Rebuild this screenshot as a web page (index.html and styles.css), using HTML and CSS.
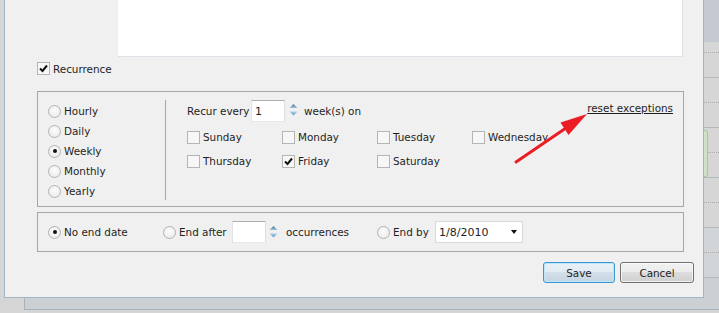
FILE: index.html
```html
<!DOCTYPE html>
<html lang="en">
<head>
    <meta charset="UTF-8">
    <title>Edit recurrence</title>
    <link rel="stylesheet" href="styles.css">
</head>
<body>
    <div class="screen">
        <div class="edge"></div>

        <div class="dialog">
            <div class="notes"></div>

            <label class="recurrence">
                <span class="box"><svg width="11" height="11" viewBox="0 0 11 11"><polyline points="2,5.5 4.5,8 9,2.5" fill="none" stroke="#111" stroke-width="2"/></svg></span>
                Recurrence
            </label>

            <div class="group pattern">
                <div class="freq">
                    <label class="opt"><span class="radio"></span>Hourly</label>
                    <label class="opt"><span class="radio"></span>Daily</label>
                    <label class="opt"><span class="radio on"></span>Weekly</label>
                    <label class="opt"><span class="radio"></span>Monthly</label>
                    <label class="opt"><span class="radio"></span>Yearly</label>
                </div>
                <div class="weekly">
                    <div class="recur-row">
                        <span class="recur-label">Recur every</span>
                        <span class="field every">1</span>
                        <svg class="spin" width="9" height="14" viewBox="0 0 9 14">
                            <defs>
                                <linearGradient id="up" x1="0" y1="0" x2="0" y2="1"><stop offset="0" stop-color="#4f6f88"/><stop offset="1" stop-color="#9cc6e2"/></linearGradient>
                                <linearGradient id="dn" x1="0" y1="0" x2="0" y2="1"><stop offset="0" stop-color="#a9d2ec"/><stop offset="1" stop-color="#5d97c0"/></linearGradient>
                            </defs>
                            <polygon points="0.5,5 4.5,1 8.5,5" fill="url(#up)"/>
                            <polygon points="0.5,8.5 4.5,12.5 8.5,8.5" fill="url(#dn)"/>
                        </svg>
                        <span class="weeks">week(s) on</span>
                        <a class="reset" href="#">reset exceptions</a>
                    </div>
                    <div class="days">
                        <label class="day"><span class="box"></span>Sunday</label>
                        <label class="day"><span class="box"></span>Monday</label>
                        <label class="day"><span class="box"></span>Tuesday</label>
                        <label class="day"><span class="box"></span>Wednesday</label>
                        <label class="day"><span class="box"></span>Thursday</label>
                        <label class="day"><span class="box"><svg width="11" height="11" viewBox="0 0 11 11"><polyline points="2,5.5 4.5,8 9,2.5" fill="none" stroke="#111" stroke-width="2"/></svg></span>Friday</label>
                        <label class="day"><span class="box"></span>Saturday</label>
                    </div>
                </div>
            </div>

            <div class="group range">
                <label class="opt no-end"><span class="radio on"></span>No end date</label>
                <div class="opt end-after">
                    <span class="radio"></span>
                    <span class="end-label">End after</span>
                    <span class="field count"></span>
                    <svg class="spin" width="9" height="14" viewBox="0 0 9 14">
                        <polygon points="0.5,5 4.5,1 8.5,5" fill="url(#up)"/>
                        <polygon points="0.5,8.5 4.5,12.5 8.5,8.5" fill="url(#dn)"/>
                    </svg>
                    <span class="occ">occurrences</span>
                </div>
                <div class="opt end-by">
                    <span class="radio"></span>
                    <span class="by-label">End by</span>
                    <span class="select">1/8/2010<span class="caret"></span></span>
                </div>
            </div>

            <div class="buttons">
                <button class="btn save">Save</button>
                <button class="btn cancel">Cancel</button>
            </div>
        </div>

        <div class="calendar">
            <div class="cal-head"></div>
            <div class="half first"></div>
            <div class="half solid"></div>
            <div class="half"></div>
            <div class="half solid"></div>
            <div class="half"></div>
            <div class="half solid"></div>
            <div class="half"></div>
            <div class="half solid"></div>
            <div class="half late"></div>
            <div class="half solid late"></div>
            <div class="appt"></div>
        </div>
    </div>
    <div class="band"></div>

    <svg class="arrow" width="80" height="60" viewBox="0 0 80 60">
        <line x1="6" y1="54" x2="56" y2="20" stroke="#ec1c24" stroke-width="3" stroke-linecap="round"/>
        <polygon points="77,6 50.5,14.5 58.5,27" fill="#ec1c24"/>
    </svg>
</body>
</html>
```

FILE: styles.css
```css
body {
    margin: 0;
    height: 313px;
    overflow: hidden;
    position: relative;
    background: #d5d5d5;
    font-family: "DejaVu Sans", "Liberation Sans", sans-serif;
    font-size: 10.4px;
    color: #1e1e1e;
}

.screen {
    display: flex;
    height: 298px;
}

.edge {
    width: 4px;
}

/* dialog */
.dialog {
    width: 700px;
    box-sizing: border-box;
    background: #f0f0f0;
    border: 1px solid #a2b5c5;
    border-top: none;
    padding: 0 19px 13px 32px;
}

.notes {
    height: 56px;
    margin: 0 1px 0 81px;
    background: #fff;
    border-right: 1px solid #dde2e8;
    border-bottom: 1px solid #dde2e8;
}

.recurrence {
    display: flex;
    align-items: center;
    gap: 3px;
    height: 13px;
    margin-top: 5px;
}

.box {
    width: 13px;
    height: 13px;
    box-sizing: border-box;
    border: 1px solid #b5b5b5;
    background: #f7f7f7;
    display: flex;
    align-items: center;
    justify-content: center;
    flex: none;
}

.radio {
    width: 13px;
    height: 13px;
    box-sizing: border-box;
    border: 1px solid #b3b3b3;
    border-radius: 50%;
    background: radial-gradient(circle at 50% 40%, #fdfdfd, #e6e6e6);
    position: relative;
    flex: none;
}

.radio.on::after {
    content: '';
    position: absolute;
    left: 3.5px;
    top: 3.5px;
    width: 4px;
    height: 4px;
    border-radius: 50%;
    background: #111;
}

.group {
    border: 1px solid #a6a6a6;
}

.pattern {
    margin-top: 16px;
    display: flex;
    padding: 8px 10px 6px;
    height: 100px;
}

.freq {
    width: 118px;
    height: 100px;
    box-sizing: border-box;
    border-right: 1px solid #a6a6a6;
    padding-top: 1px;
}

.opt {
    display: flex;
    align-items: center;
    gap: 3px;
    height: 20px;
}

.weekly {
    flex: 1;
    padding-left: 21px;
}

.recur-row {
    display: flex;
    align-items: center;
    height: 22px;
}

.recur-label {
    width: 64px;
}

.field {
    box-sizing: border-box;
    height: 22px;
    background: #fff;
    border: 1px solid;
    border-color: #abadb3 #dbdfe6 #e3e9ef #e2e3ea;
    padding-left: 3px;
    display: flex;
    align-items: center;
    font-size: 11px;
}

.every {
    width: 34px;
}

.recur-row .spin {
    margin-left: 4px;
    margin-top: -3px;
}

.weeks {
    margin-left: 6px;
}

.reset {
    margin-left: auto;
    align-self: flex-start;
    margin-top: 1px;
    line-height: 14px;
    color: #1e1e1e;
    text-decoration: underline;
}

.days {
    display: grid;
    grid-template-columns: repeat(4, 95px);
    grid-auto-rows: 24px;
    margin-top: 3px;
}

.day {
    display: flex;
    align-items: center;
    gap: 3px;
}

.range {
    margin-top: 5px;
    display: flex;
    align-items: center;
    padding: 8px 10px;
    height: 22px;
}

.range .opt {
    height: 22px;
}

.no-end {
    width: 115px;
}

.end-after {
    width: 214px;
}

.end-label {
    width: 50px;
}

.count {
    width: 34px;
}

.occ {
    margin-left: 5px;
}

.by-label {
    width: 39px;
}

.select {
    width: 88px;
    height: 22px;
    box-sizing: border-box;
    border: 1px solid #d9d9d9;
    background: #fff;
    display: flex;
    align-items: center;
    padding-left: 3px;
    position: relative;
    font-size: 11px;
}

.caret {
    position: absolute;
    right: 5px;
    top: 8px;
    border-left: 3.5px solid transparent;
    border-right: 3.5px solid transparent;
    border-top: 4px solid #111;
}

.buttons {
    display: flex;
    justify-content: flex-end;
    gap: 5px;
    margin: 10px -10px 0 0;
}

.btn {
    height: 21px;
    padding: 0;
    font-family: inherit;
    font-size: 10.4px;
    color: #1e1e1e;
    border-radius: 3px;
    border: 1px solid #707070;
    background: linear-gradient(#f2f2f2, #ebebeb 50%, #dddddd 50%, #cfcfcf);
    box-shadow: inset 0 0 0 1px rgba(255, 255, 255, 0.7);
}

.save {
    width: 72px;
    border-color: #3c96d2;
    background: linear-gradient(#eaf2f8, #e0eaf2 50%, #d3dfe9 50%, #c7d5e1);
    box-shadow: inset 0 0 0 1px #bde6fb;
}

.cancel {
    width: 74px;
}

/* calendar behind the dialog */
.calendar {
    width: 15px;
    position: relative;
    background: #cbd0d4;
}

.cal-head {
    height: 42px;
    background: #c4c9d2;
}

.half {
    height: 24px;
    background: #d6d6d6;
    border-bottom: 1px dotted #acacac;
}

.half.first {
    height: 10px;
}

.half.solid {
    border-bottom: 1px solid #b3b8bd;
}

.half.late {
    background: #d2d5d8;
}

.appt {
    position: absolute;
    left: 0;
    top: 130px;
    width: 3px;
    height: 45px;
    background: #cfe1c6;
    border: 1px solid #a9c99d;
    border-left: none;
    border-radius: 0 3px 3px 0;
}

.band {
    height: 11px;
    margin-left: 24px;
    background: #cad0d4;
    border-left: 1px solid #a6b2bc;
    border-bottom: 1px solid #a6b2bc;
}

.arrow {
    position: absolute;
    left: 510px;
    top: 108px;
}
```
